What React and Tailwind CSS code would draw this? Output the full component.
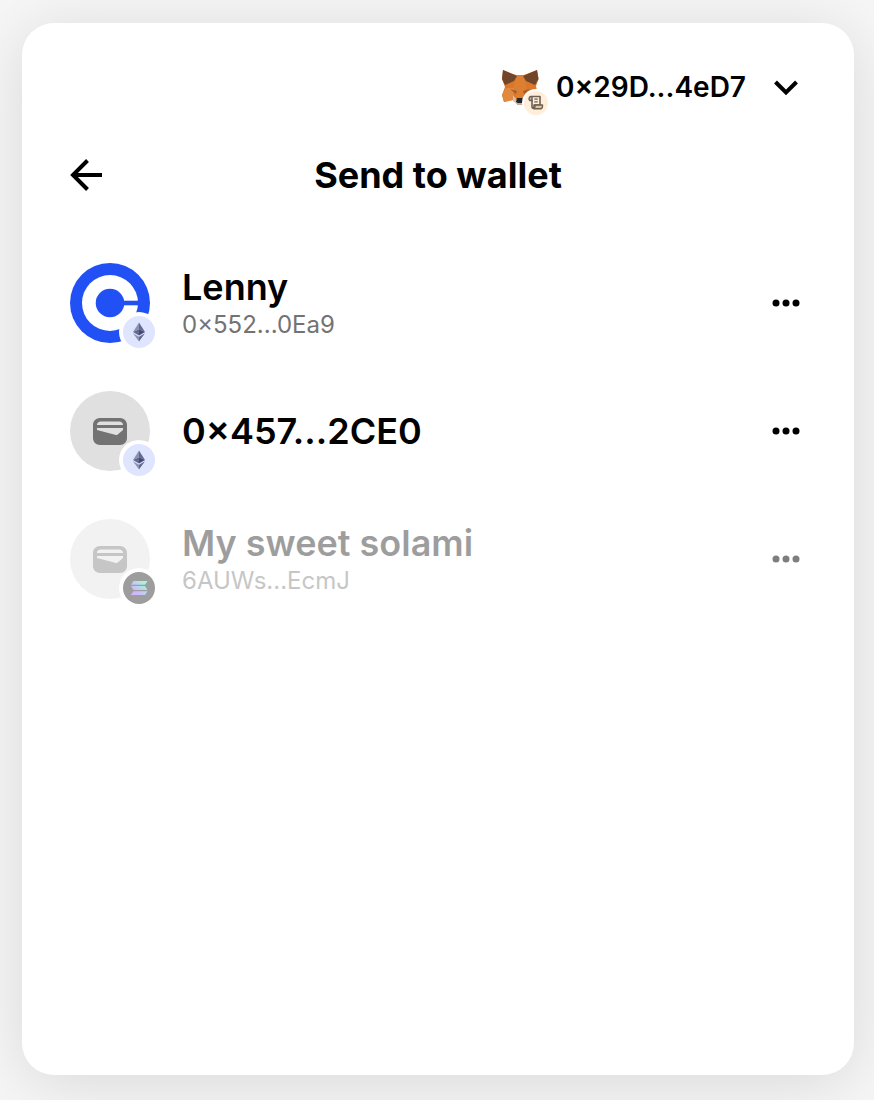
import React from 'react';

const wallets = [
    { id: 'lenny', name: 'Lenny', address: '0×552...0Ea9', avatar: 'coinbase', chain: 'ethereum' },
    { id: 'evm', name: '0×457...2CE0', avatar: 'wallet', chain: 'ethereum' },
    { id: 'solami', name: 'My sweet solami', address: '6AUWs...EcmJ', avatar: 'wallet', chain: 'solana', disabled: true }
];

const FoxIcon = () => (
    <svg viewBox="0 0 40 40" className="w-10 h-10" aria-hidden="true">
        <path d="M3 3L16 8H24L37 3L38.5 12L36 19L38 28L35 35L27 33L23 37H17L13 33L4 35L2 28L5 20L2 12Z" fill="#d9772b" />
        <path d="M2 28L6 21H14L13 33L4 35Z" fill="#e18a3f" />
        <path d="M16 8H24L26 20L24 31H16L14 20Z" fill="#dd7f30" />
        <path d="M3 3L17 9L14 14L5 18L2 12Z" fill="#70452a" />
        <path d="M37 3L23 9L26 14L35 18L38.5 12Z" fill="#70452a" />
        <path d="M10 22L17 24L16 27ZM30 22L23 24L24 27Z" fill="#a85a2c" />
        <path d="M13 28L17 33V37L13 34ZM27 28L23 33V37L27 34Z" fill="#d5bfb2" />
        <path d="M17 31H23L24 35L22 36H18L16 35Z" fill="#262626" />
        <path d="M17 36H23V38H17Z" fill="#c0ad9e" />
    </svg>
);

const ScrollIcon = () => (
    <svg viewBox="0 0 24 24" className="w-6 h-6" fill="none" strokeLinejoin="round" aria-hidden="true">
        <path d="M7 5.5H16V14H10V17.5C8.5 17.5 8 16.5 8 15.5V9" fill="#ffeeda" stroke="#6b6054" strokeWidth="1.6" />
        <path d="M8 9.5H5.8C4.6 8.5 4.8 5.5 7 5.5C8.3 5.5 8.2 7.5 8 9.5Z" fill="#c9b49c" stroke="#6b6054" strokeWidth="1.4" />
        <path d="M10.3 8.2H13.8M10.3 10.8H13.8" stroke="#6b6054" strokeWidth="1.3" />
        <path d="M11 14H18.5C18.8 15.8 18 17.8 16.5 17.8H10C11 17 11.3 15.5 11 14Z" fill="#ebc28e" stroke="#6b6054" strokeWidth="1.4" />
    </svg>
);

const CoinbaseIcon = () => (
    <svg viewBox="0 0 80 80" className="w-20 h-20" aria-hidden="true">
        <circle cx="40" cy="40" r="40" fill="#2151f5" />
        <circle cx="40" cy="40" r="28" fill="#fff" />
        <circle cx="40" cy="40" r="14.3" fill="#2151f5" />
        <path d="M50 37.7H70V42.3H50Z" fill="#2151f5" />
    </svg>
);

const WalletIcon = () => (
    <svg viewBox="0 0 34 27" className="w-[34px] h-[27px]" aria-hidden="true">
        <path
            fillRule="evenodd"
            fill="#737373"
            d="M7 0H27C31 0 34 3 34 7V20C34 24 31 27 27 27H7C3 27 0 24 0 20V7C0 3 3 0 7 0ZM8 3.5C5.5 3.5 4 5 4 7H30C30 5 28.5 3.5 26 3.5ZM4 10V12L23 17C23.6 17.1 24 17 24.4 16.7L30 12V10Z"
        />
    </svg>
);

const EthereumIcon = () => (
    <svg viewBox="0 0 32 32" className="w-8 h-8" aria-hidden="true">
        <path d="M16 6.5L10 16L16 13.3Z" fill="#8a92b2" />
        <path d="M16 6.5L22 16L16 13.3Z" fill="#62688f" />
        <path d="M16 13.3L10 16L16 19.5Z" fill="#62688f" />
        <path d="M16 13.3L22 16L16 19.5Z" fill="#454a75" />
        <path d="M10 17.2L16 20.7V25.5Z" fill="#8a92b2" />
        <path d="M22 17.2L16 20.7V25.5Z" fill="#62688f" />
    </svg>
);

const SolanaIcon = () => (
    <svg viewBox="0 0 32 32" className="w-8 h-8" aria-hidden="true">
        <defs>
            <linearGradient id="sol" x1="9" y1="23" x2="23" y2="9" gradientUnits="userSpaceOnUse">
                <stop offset="0" stopColor="#9945ff" />
                <stop offset="0.25" stopColor="#8752f3" />
                <stop offset="0.55" stopColor="#5497d5" />
                <stop offset="1" stopColor="#19fb9b" />
            </linearGradient>
        </defs>
        <path d="M10.5 9H24.5L22 12.8H8ZM8 14.1H22L24.5 17.9H10.5ZM10.5 19.2H24.5L22 23H8Z" fill="url(#sol)" />
    </svg>
);

const WalletAvatar = ({ avatar, chain }) => (
    <div className="relative shrink-0 w-20 h-20">
        {avatar === 'coinbase' ? (
            <CoinbaseIcon />
        ) : (
            <div className="w-20 h-20 rounded-full bg-[#e0e0e0] flex items-center justify-center">
                <WalletIcon />
            </div>
        )}
        <div className={`absolute -right-[5px] -bottom-[5px] rounded-full ring-4 ring-white ${chain === 'solana' ? 'bg-[#0d0d0d]' : 'bg-[#e0e5ff]'}`}>
            {chain === 'solana' ? <SolanaIcon /> : <EthereumIcon />}
        </div>
    </div>
);

const WalletRow = ({ wallet }) => (
    <li className="flex items-center">
        <button
            type="button"
            disabled={wallet.disabled}
            className={`flex flex-1 min-w-0 items-center gap-8 text-left ${wallet.disabled ? 'text-[#0d0d0d] opacity-40' : ''}`}
        >
            <WalletAvatar avatar={wallet.avatar} chain={wallet.chain} />
            <span className={`flex flex-col ${wallet.address ? 'pt-1' : ''}`}>
                <span className="text-4xl leading-10 font-semibold">{wallet.name}</span>
                {wallet.address && <span className="text-2xl leading-9 text-[#737373]">{wallet.address}</span>}
            </span>
        </button>
        <button type="button" aria-label={`Options for ${wallet.name}`} className={`shrink-0 mr-1 ${wallet.disabled ? 'opacity-50' : ''}`}>
            <svg viewBox="0 0 32 32" className="w-8 h-8" aria-hidden="true">
                <circle cx="6" cy="16" r="3.5" />
                <circle cx="16" cy="16" r="3.5" />
                <circle cx="26" cy="16" r="3.5" />
            </svg>
        </button>
    </li>
);

const App = () => (
    <div className="min-h-screen flex bg-[#f6f6f6] pt-[23px] pb-[25px] pl-[22px] pr-5 font-['Inter',sans-serif] text-black">
        <main className="flex-1 min-w-0 bg-white rounded-[32px] px-12 pt-11 pb-12 shadow-[0_8px_64px_rgba(0,0,0,0.12)]">
            <div className="flex justify-end">
                <button type="button" className="flex items-center h-10 pr-1">
                    <span className="relative">
                        <FoxIcon />
                        <span className="absolute -right-2 -bottom-2 rounded-full bg-[#ffeeda] ring-2 ring-white">
                            <ScrollIcon />
                        </span>
                    </span>
                    <span className="ml-4 text-[28px] leading-9 font-semibold">0×29D...4eD7</span>
                    <svg viewBox="0 0 32 32" className="ml-6 w-8 h-8" fill="none" stroke="currentColor" strokeWidth="4" aria-hidden="true">
                        <path d="M5.5 11L16 21.5L26.5 11" />
                    </svg>
                </button>
            </div>

            <div className="mt-11 grid grid-cols-[40px_1fr_40px] items-center h-12">
                <button type="button" aria-label="Back">
                    <svg viewBox="0 0 32 32" className="w-8 h-8" fill="none" stroke="currentColor" strokeWidth="4" aria-hidden="true">
                        <path d="M32 16H3M17.5 1.5L3 16L17.5 30.5" />
                    </svg>
                </button>
                <h1 className="text-center text-4xl leading-10 font-bold">Send to wallet</h1>
            </div>

            <ul className="mt-16 flex flex-col gap-12">
                {wallets.map((wallet) => (
                    <WalletRow key={wallet.id} wallet={wallet} />
                ))}
            </ul>
        </main>
    </div>
);

export default App;
